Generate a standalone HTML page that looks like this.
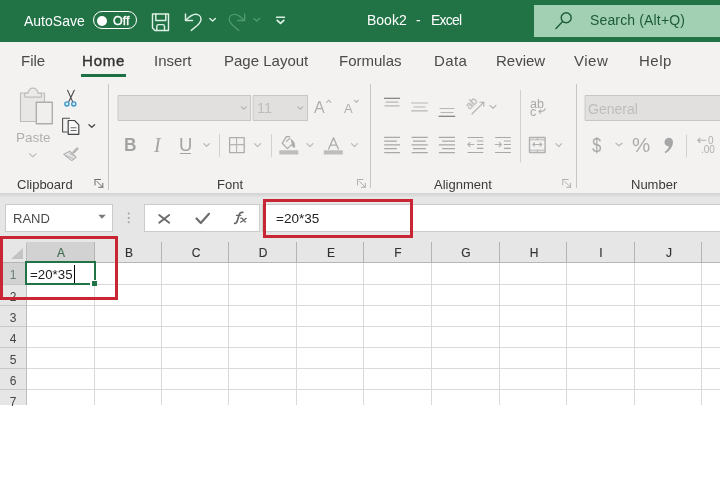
<!DOCTYPE html>
<html><head><meta charset="utf-8">
<style>
*{margin:0;padding:0;box-sizing:border-box}
html,body{width:720px;height:480px;overflow:hidden;background:#fff;font-family:"Liberation Sans",sans-serif}
.a{will-change:transform}
.a{position:absolute;white-space:nowrap}
#title{left:0;top:0;width:720px;height:42px;background:#217346}
.wt{color:#fff;font-size:14px;line-height:16px}
#ribbon{left:0;top:42px;width:720px;height:151px;background:#f3f2f1}
.tab{font-size:15px;color:#4a4a4a;line-height:18px;top:52px}
.grp{font-size:13px;color:#3a3a3a;line-height:15px;top:177px}
.sep{width:1px;background:#c8c6c4}
#fbar{left:0;top:193px;width:720px;height:50px;background:#e6e6e6}
.box{background:#fff;border:1px solid #cbcbcb}
.hdr{background:#e6e6e6}
.ch{top:247px;width:40px;text-align:center;font-size:12px;line-height:12px;-webkit-text-stroke:0.15px}
.rh{left:0;width:26px;text-align:center;font-size:12px;line-height:14px}
</style></head><body>
<div id="title" class="a"></div>
<div class="a wt" style="left:24px;top:13px">AutoSave</div>
<div class="a" style="left:93px;top:11px;width:44px;height:18px;border:1.8px solid #fff;border-radius:9px"></div>
<div class="a" style="left:96.5px;top:15.5px;width:10px;height:10px;border-radius:5px;background:#fff"></div>
<div class="a" style="left:112.5px;top:13.5px;font-size:12.5px;color:#fff;line-height:14px;-webkit-text-stroke:0.35px #fff">Off</div>
<div class="a wt" style="left:367px;top:12px">Book2</div>
<div class="a wt" style="left:416px;top:12px">-</div>
<div class="a wt" style="left:431px;top:12px;letter-spacing:-0.8px">Excel</div>
<div class="a" style="left:534px;top:5px;width:186px;height:32px;background:#a1d0b3"></div>
<div class="a" style="left:589.5px;top:12px;font-size:14px;letter-spacing:0.15px;color:#1d5b38;line-height:16px">Search (Alt+Q)</div>

<div id="ribbon" class="a"></div>
<div class="a tab" style="left:21px">File</div>
<div class="a tab" style="left:81.5px;font-size:15px;letter-spacing:0.8px;color:#333;-webkit-text-stroke:0.4px #333">Home</div>
<div class="a" style="left:81px;top:74px;width:45px;height:3px;background:#1e7145"></div>
<div class="a tab" style="left:154px">Insert</div>
<div class="a tab" style="left:224px">Page Layout</div>
<div class="a tab" style="left:339px">Formulas</div>
<div class="a tab" style="left:433.5px;letter-spacing:0.4px">Data</div>
<div class="a tab" style="left:495.8px">Review</div>
<div class="a tab" style="left:574px;letter-spacing:0.5px">View</div>
<div class="a tab" style="left:639px;letter-spacing:0.5px">Help</div>

<svg class="a" style="left:0;top:0" width="720" height="200" fill="none" stroke-linecap="round" stroke-linejoin="round">
<!-- title icons -->
<g stroke="#dff0e5" stroke-width="1.45">
<path d="M152.5 14H168.5V30.5H155L152.5 28Z"/>
<path d="M155.8 14V20.5H165.8V14"/>
<path d="M156.8 30.5V26.3Q156.8 24.6 158.5 24.6H162.8Q164.5 24.6 164.5 26.3V30.5"/>
<path d="M185.5 14V20.5H192.5"/>
<path d="M185.8 20.2C189 17 192 14.3 195.5 14.3C198.8 14.3 201 16.5 201 19.2C201 21.5 199.8 23 197.5 25.3L191.3 30.4"/>
<path d="M209.8 18.5L212.6 21L215.4 18.5" stroke-width="1.4"/>
<path d="M276.5 17.3H284.5"/>
<path d="M277.2 20.3L280.5 23.3L283.8 20.3" stroke-width="1.8"/>
</g>
<g stroke="#4f9a6d" stroke-width="1.3">
<path d="M244.7 14V20.5H237.7"/>
<path d="M244.4 20.2C241.2 17 238.2 14.3 234.7 14.3C231.4 14.3 229.2 16.5 229.2 19.2C229.2 21.5 230.4 23 232.7 25.3L238.9 30.4"/>
<path d="M254 18.5L256.8 21L259.6 18.5" stroke-width="1.4"/>
</g>
<!-- search icon -->
<g stroke="#1d5b38" stroke-width="1.4">
<circle cx="566.2" cy="17.8" r="5"/>
<path d="M562.6 21.6L556 28.5"/>
</g>
<!-- clipboard / paste -->
<path d="M20.5 93H26.5V97H40V93H44.5V121.5H20.5Z" fill="#e8e7e6" stroke="#bdbdbd" stroke-width="1.2"/>
<path d="M24.5 97V94.8Q24.5 93.2 26.3 93.2H28Q28.8 88.2 33 88.2Q37.2 88.2 38 93.2H39.7Q41.5 93.2 41.5 94.8V97Z" fill="#ebeae9" stroke="#bdbdbd" stroke-width="1.2"/>
<rect x="36.3" y="102.3" width="16" height="21.5" fill="#f0efee" stroke="#adadad" stroke-width="1.4"/>
<path d="M29.5 153.8L32.8 156.8L36.1 153.8" stroke="#c0c0c0" stroke-width="1.2"/>
<!-- scissors -->
<path d="M67.6 90.3L72.6 101.6M74.3 90.3L68.9 101.6" stroke="#4a4a4a" stroke-width="1.1"/>
<circle cx="66.9" cy="103.9" r="2.1" fill="#d6eef9" stroke="#3b93c9" stroke-width="1.3"/>
<circle cx="73.8" cy="103.9" r="2.1" fill="#d6eef9" stroke="#3b93c9" stroke-width="1.3"/>
<!-- copy -->
<path d="M67.5 132H62.6V118.3H69.5" stroke="#505050" stroke-width="1.1"/>
<path d="M68.2 120.5H74.5L78.8 124.8V134.3H68.2Z" fill="#f7f7f7" stroke="#454545" stroke-width="1.2"/>
<path d="M71 127.8H76M71 130.5H76" stroke="#6a6a6a" stroke-width="1.1"/>
<path d="M89 124.7L91.8 127.4L94.6 124.7" stroke="#444" stroke-width="1.3"/>
<!-- format painter -->
<path d="M77.3 148.7L73.6 152.4" stroke="#b4b4b4" stroke-width="2.6"/>
<path d="M63.8 154.2L69.8 151.3L76 157.2L71.8 160.6Z" fill="#ebebeb" stroke="#b0b0b0" stroke-width="1.2"/>
<path d="M66.6 155.6L73 158.3M69.3 153.6L74.6 156.2" stroke="#b8b8b8" stroke-width="1"/>
<!-- launchers -->
<g stroke="#8a8a8a" stroke-width="1">
<path d="M95 179.5H100.5M95 179.5V185M97 181.5L102.8 187.3M102.8 183.3V187.3H98.8" stroke="#6a6a6a"/>
<path d="M357.5 179.5H363M357.5 179.5V185M359.5 181.5L365.3 187.3M365.3 183.3V187.3H361.3" stroke="#b0b0b0"/>
<path d="M562.8 179.5H568.3M562.8 179.5V185M564.8 181.5L570.6 187.3M570.6 183.3V187.3H566.6" stroke="#b0b0b0"/>
</g>
<!-- font boxes -->
<rect x="118.5" y="95.5" width="132" height="25" fill="#e1e0df" stroke="#c6c6c6"/>
<rect x="253.5" y="95.5" width="54" height="25" fill="#e1e0df" stroke="#c6c6c6"/>
<rect x="585.5" y="95.5" width="140" height="25" fill="#e1e0df" stroke="#c6c6c6"/>
<g stroke="#b8b8b8" stroke-width="1.2">
<path d="M241.3 106.8L243.8 109.2L246.3 106.8"/>
<path d="M297.8 106.8L300.3 109.2L302.8 106.8"/>
<path d="M326.8 102.3L328.8 100.2L330.8 102.3"/>
<path d="M354.3 100.2L356.3 102.3L358.3 100.2"/>
<path d="M203.8 143.6L206.6 146.4L209.4 143.6"/>
<path d="M254.6 143.6L257.6 146.6L260.6 143.6"/>
<path d="M307 143.6L310 146.6L313 143.6"/>
<path d="M351.5 143.6L354.5 146.6L357.5 143.6"/>
<path d="M490 105.5L493 108.3L496 105.5"/>
<path d="M556 143.6L558.8 146.6L561.6 143.6"/>
<path d="M616 143.2L619 145.8L622 143.2"/>
</g>
<!-- separators small -->
<g stroke="#d2d0ce" stroke-width="1">
<path d="M219.5 134.5V156.5M271.5 134.5V156.5M520.5 90.5V162M686.5 135V156.5"/>
</g>
<!-- borders icon -->
<rect x="229.6" y="137.6" width="14.6" height="15" stroke="#acacac" stroke-width="1.3"/>
<path d="M236.6 138V152.5M229.6 144.6H244.2" stroke="#b4b4b4" stroke-width="1.1"/>
<!-- fill colour -->
<path d="M289.6 136.6H286.4L282.3 143.2L287.4 148.6L291.6 144.6" stroke="#acacac" stroke-width="1.3"/>
<path d="M286.4 141.5L290 138.2" stroke="#acacac" stroke-width="1.1"/>
<path d="M291.2 139.8Q294.6 140.6 294.8 147.2L292.6 146.8Q292.2 143.8 291.2 139.8Z" fill="#acacac" stroke="#acacac" stroke-width="0.8"/>
<rect x="279.3" y="150.3" width="19" height="4.2" fill="#bdbdbd"/>
<rect x="323.8" y="150.3" width="19" height="4.2" fill="#bdbdbd"/>
<path d="M328.6 149L333.5 137.8L338.4 149M330.3 145.2H336.7" stroke="#acacac" stroke-width="1.3"/>
<!-- alignment lines -->
<g stroke="#a8a8a8" stroke-width="1.2" stroke-linecap="butt">
<path d="M384 98.3H400" stroke="#7c7c7c"/><path d="M385.5 102.2H398.5M384.5 105.9H399.5" stroke="#b6b6b6"/>
<path d="M411.2 103H427.8M413.5 107H425.5M411.2 110.8H427.8" stroke="#b6b6b6"/>
<path d="M439.5 108.5H454.5M440.5 112.5H453.5" stroke="#b6b6b6"/><path d="M438.6 116.3H455.2" stroke="#7c7c7c"/>
<path d="M384.2 137.4H400M384.2 141.1H396.9M384.2 144.8H400M384.2 148.6H396.9M384.2 152.6H400"/>
<path d="M411.7 137.4H427.8M413 141.1H425.9M411.7 144.8H427.8M413 148.6H425.9M411.7 152.6H427.8"/>
<path d="M438.9 137.4H455M442.2 141.1H455M438.9 144.8H455M442.2 148.6H455M438.9 152.6H455"/>
<path d="M467.6 137.5H483.3M477 141H483.3M477 144.5H483.3M477 148.3H483.3M467.6 152.5H483.3"/>
<path d="M495.1 137.5H510.8M503.9 141H510.8M503.9 144.5H510.8M503.9 148.3H510.8M495.1 152.5H510.8"/>
</g>
<g stroke="#b0b0b0" stroke-width="1.1">
<path d="M467.8 144.5H474M470 142.3L467.8 144.5L470 146.7"/>
<path d="M495.2 144.5H501.4M499.2 142.3L501.4 144.5L499.2 146.7"/>
<path d="M472 114L483.8 102.2M479.8 102.3H483.8V106.3"/>
<rect x="529.5" y="137.5" width="15.6" height="15" stroke-width="1.4"/>
<path d="M530 139.8H544.6M530 150.2H544.6M537.3 137.5V139.8M537.3 150.2V152.5" stroke-width="0.9"/>
<path d="M532.8 144.5H541.8M534.6 142.8L532.8 144.5L534.6 146.2M540 142.8L541.8 144.5L540 146.2"/>
<path d="M545.2 108.6Q545.2 111.6 539 111.6M540.8 109.8L538.8 111.6L540.8 113.4"/>
</g>
</svg>

<div class="a" style="left:16px;top:130px;font-size:13.5px;color:#b0b0b0;line-height:15px">Paste</div>
<div class="a" style="left:124.3px;top:134.8px;font-size:19px;font-weight:bold;color:#a2a2a2;line-height:20px;transform:scaleX(0.9);transform-origin:0 0">B</div>
<div class="a" style="left:154px;top:135px;font-size:20px;font-family:'Liberation Serif';font-style:italic;color:#a4a4a4;line-height:20px">I</div>
<div class="a" style="left:178.5px;top:134.7px;font-size:18.5px;color:#a4a4a4;line-height:20px">U</div>
<div class="a" style="left:180px;top:152.5px;width:11px;height:1.2px;background:#a4a4a4"></div>
<div class="a" style="left:256.5px;top:100px;font-size:14.5px;color:#bdbdbd;line-height:16px">11</div>
<div class="a" style="left:313.5px;top:98.5px;font-size:16px;color:#b0b0b0;line-height:18px">A</div>
<div class="a" style="left:344px;top:101px;font-size:13px;color:#b0b0b0;line-height:15px">A</div>
<div class="a" style="left:588px;top:102px;font-size:14px;color:#bdbdbd;line-height:15px">General</div>
<div class="a" style="left:592px;top:134.5px;font-size:20.5px;color:#a8a8a8;line-height:20px;transform:scaleX(0.82);transform-origin:0 0">$</div>
<div class="a" style="left:632px;top:134.5px;font-size:20.5px;color:#acacac;line-height:20px">%</div>
<svg class="a" style="left:0;top:0" width="720" height="200"><path d="M668.6 137.8A4.3 4.3 0 0 1 673 142.3Q673 148.5 665.6 153.2L664.6 152Q668.6 148.8 669 146.5A4.3 4.3 0 0 1 668.6 137.8Z" fill="#a6a6a6"/><path d="M697.8 140.3H705.5M700 138.1L697.8 140.3L700 142.5" stroke="#b0b0b0" stroke-width="1.1" fill="none" stroke-linecap="round"/></svg>
<div class="a" style="left:707.5px;top:135.5px;font-size:10px;color:#b0b0b0;line-height:10px">0</div>
<div class="a" style="left:700.5px;top:144.5px;font-size:10px;color:#b0b0b0;line-height:10px">.00</div>
<div class="a" style="left:529.8px;top:98px;font-size:12.5px;color:#a8a8a8;line-height:12px">ab</div>
<div class="a" style="left:530px;top:105.5px;font-size:12.5px;color:#a8a8a8;line-height:12px">c</div>
<div class="a" style="left:465px;top:97px;font-size:11px;color:#a8a8a8;line-height:12px;transform:rotate(-45deg);transform-origin:50% 50%">ab</div>
<div class="a grp" style="left:17px">Clipboard</div>
<div class="a grp" style="left:217px">Font</div>
<div class="a grp" style="left:434px">Alignment</div>
<div class="a grp" style="left:631px">Number</div>
<div class="a sep" style="left:108px;top:84px;height:106px"></div>
<div class="a sep" style="left:370px;top:84px;height:104px"></div>
<div class="a sep" style="left:576px;top:84px;height:104px"></div>

<div id="fbar" class="a"></div>
<div class="a" style="left:0;top:193px;width:720px;height:4px;background:linear-gradient(#d2d2d2,#e2e2e2)"></div>
<div class="a box" style="left:5px;top:204px;width:108px;height:28px"></div>
<div class="a" style="left:13px;top:211px;font-size:13px;color:#4a4a4a;line-height:15px">RAND</div>
<div class="a box" style="left:144px;top:204px;width:116px;height:28px"></div>
<div class="a box" style="left:262px;top:204px;width:470px;height:28px"></div>

<svg class="a" style="left:0;top:190px" width="270" height="50" fill="none" stroke-linecap="round">
<path d="M98.3 24.7H105.8L102 28.8Z" fill="#7a7a7a"/>
<circle cx="128.7" cy="23.6" r="1" fill="#a0a0a0"/>
<circle cx="128.7" cy="28" r="1" fill="#a0a0a0"/>
<circle cx="128.7" cy="32.3" r="1" fill="#a0a0a0"/>
<path d="M159.2 25L169.2 32.8M169.2 25L159.2 32.8" stroke="#6a6a6a" stroke-width="1.8"/>
<path d="M196.5 28.5L200.8 33L209 23.8" stroke="#6e6e6e" stroke-width="2.2" stroke-linejoin="round"/>
</svg>
<svg class="a" style="left:0;top:0" width="270" height="240" fill="none" stroke="#6a6a6a" stroke-linecap="round">
<path d="M234.6 223.4Q236.8 223.6 237.6 220L239.3 214.2Q240.2 212 242.8 212.4" stroke-width="1.7"/>
<path d="M236.4 215.4H240.8" stroke-width="1.2"/>
<path d="M240.9 218.2Q242.2 217.6 243.2 219.8Q244.3 222.3 245.8 221.8M246.2 218.4L240.6 222.2" stroke-width="1.3"/>
</svg>
<div class="a" style="left:276px;top:211px;font-size:13.5px;color:#222;line-height:15px">=20*35</div>
<!--GRID-->
<div class="a hdr" style="left:0;top:232px;width:720px;height:30px"></div>
<div class="a" style="left:0;top:262px;width:720px;height:218px;background:#fff"></div>
<div class="a" style="left:26px;top:242px;width:68px;height:20px;background:#d2d2d2"></div>
<div class="a" style="left:0;top:262px;width:25px;height:22px;background:#d2d2d2"></div>
<div class="a" style="left:0;top:284px;width:26px;height:121px;background:#e6e6e6"></div>
<svg class="a" style="left:0;top:0" width="720" height="480">
<rect x="94" y="242" width="1" height="20" fill="#b4b4b4"/>
<rect x="161" y="242" width="1" height="20" fill="#b4b4b4"/>
<rect x="228" y="242" width="1" height="20" fill="#b4b4b4"/>
<rect x="296" y="242" width="1" height="20" fill="#b4b4b4"/>
<rect x="363" y="242" width="1" height="20" fill="#b4b4b4"/>
<rect x="431" y="242" width="1" height="20" fill="#b4b4b4"/>
<rect x="499" y="242" width="1" height="20" fill="#b4b4b4"/>
<rect x="566" y="242" width="1" height="20" fill="#b4b4b4"/>
<rect x="634" y="242" width="1" height="20" fill="#b4b4b4"/>
<rect x="701" y="242" width="1" height="20" fill="#b4b4b4"/>
<rect x="0" y="262" width="720" height="1" fill="#b6b6b6"/>
<rect x="94" y="263" width="1" height="142" fill="#dadada"/>
<rect x="161" y="263" width="1" height="142" fill="#dadada"/>
<rect x="228" y="263" width="1" height="142" fill="#dadada"/>
<rect x="296" y="263" width="1" height="142" fill="#dadada"/>
<rect x="363" y="263" width="1" height="142" fill="#dadada"/>
<rect x="431" y="263" width="1" height="142" fill="#dadada"/>
<rect x="499" y="263" width="1" height="142" fill="#dadada"/>
<rect x="566" y="263" width="1" height="142" fill="#dadada"/>
<rect x="634" y="263" width="1" height="142" fill="#dadada"/>
<rect x="701" y="263" width="1" height="142" fill="#dadada"/>
<rect x="26" y="284" width="694" height="1" fill="#dadada"/>
<rect x="0" y="284" width="26" height="1" fill="#c8c8c8"/>
<rect x="26" y="305" width="694" height="1" fill="#dadada"/>
<rect x="0" y="305" width="26" height="1" fill="#c8c8c8"/>
<rect x="26" y="326" width="694" height="1" fill="#dadada"/>
<rect x="0" y="326" width="26" height="1" fill="#c8c8c8"/>
<rect x="26" y="347" width="694" height="1" fill="#dadada"/>
<rect x="0" y="347" width="26" height="1" fill="#c8c8c8"/>
<rect x="26" y="368" width="694" height="1" fill="#dadada"/>
<rect x="0" y="368" width="26" height="1" fill="#c8c8c8"/>
<rect x="26" y="389" width="694" height="1" fill="#dadada"/>
<rect x="0" y="389" width="26" height="1" fill="#c8c8c8"/>
<rect x="26" y="243" width="1" height="162" fill="#bdbdbd"/>
<polygon points="11,259 23,259 23,248" fill="#c3c3c3"/>
</svg>
<div class="a ch" style="left:41.2px;color:#3f6b50">A</div>
<div class="a ch" style="left:108.7px;color:#333">B</div>
<div class="a ch" style="left:175.7px;color:#333">C</div>
<div class="a ch" style="left:243.2px;color:#333">D</div>
<div class="a ch" style="left:310.7px;color:#333">E</div>
<div class="a ch" style="left:378.2px;color:#333">F</div>
<div class="a ch" style="left:446.2px;color:#333">G</div>
<div class="a ch" style="left:513.7px;color:#333">H</div>
<div class="a ch" style="left:581.2px;color:#333">I</div>
<div class="a ch" style="left:648.7px;color:#333">J</div>
<div class="a rh" style="top:268px;color:#6a7c71">1</div>
<div class="a rh" style="top:290px;color:#444">2</div>
<div class="a rh" style="top:311px;color:#444">3</div>
<div class="a rh" style="top:332px;color:#444">4</div>
<div class="a rh" style="top:353px;color:#444">5</div>
<div class="a rh" style="top:374px;color:#444">6</div>
<div class="a rh" style="top:395px;color:#444">7</div>
<!--/GRID-->

<div class="a" style="left:25px;top:261px;width:71px;height:24px;border:2px solid #217346"></div>
<div class="a" style="left:90px;top:280px;width:7px;height:6px;background:#fff"></div>
<div class="a" style="left:92px;top:281px;width:5px;height:5px;background:#217346"></div>
<div class="a" style="left:30px;top:267px;font-size:13.3px;color:#222;line-height:15px">=20*35</div>
<div class="a" style="left:74px;top:265px;width:1px;height:18px;background:#000"></div>
<div class="a" style="left:0;top:236px;width:118px;height:63.5px;border:3px solid #c82634"></div>
<div class="a" style="left:263px;top:198.5px;width:150px;height:38.5px;border:3px solid #c82634"></div>
</body></html>
